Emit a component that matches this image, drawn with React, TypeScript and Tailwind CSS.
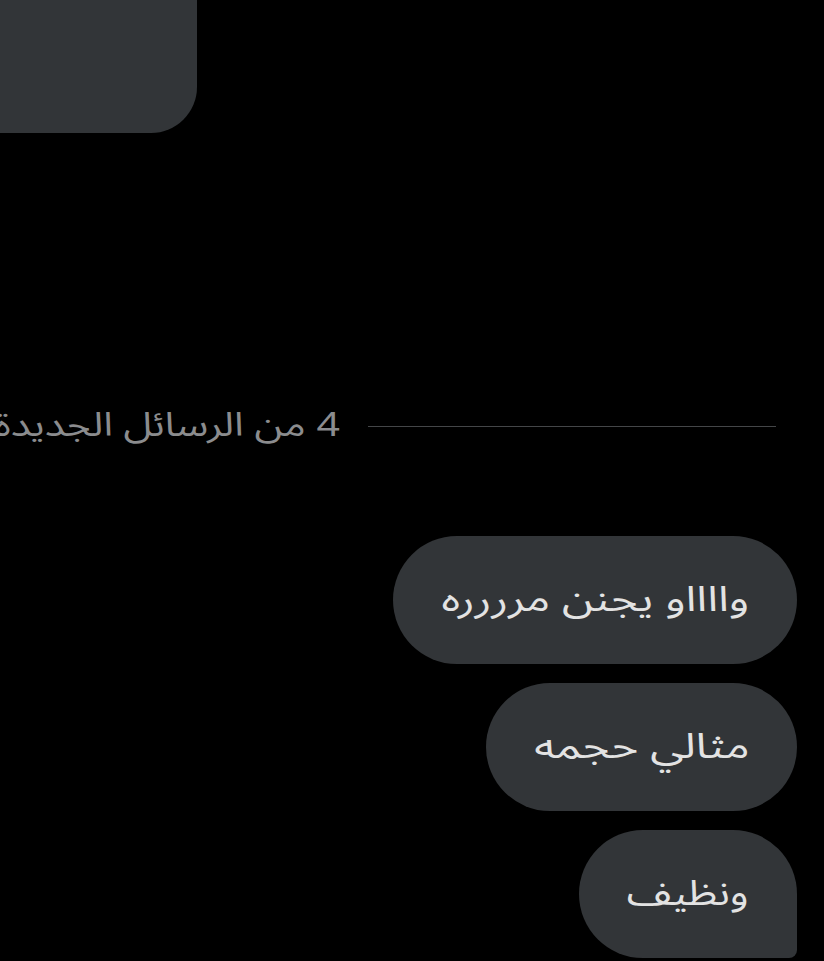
const arabicFont = { fontFamily: '"Noto Sans Arabic", "Noto Sans", "DejaVu Sans", sans-serif' };

function Bubble({ text, width, scale, last }: { text: string; width: string; scale: string; last?: boolean }) {
  return (
    <div
      dir="rtl"
      className={`flex h-[128px] items-center justify-center bg-[#323538] text-[35px] text-[#e3e3e3] ${width} ${
        last ? "rounded-[64px] rounded-br-[8px]" : "rounded-[64px]"
      }`}
      style={arabicFont}
    >
      <span className={`inline-block whitespace-nowrap ${scale}`}>{text}</span>
    </div>
  );
}

export default function App() {
  return (
    <main className="flex h-[961px] w-[824px] flex-col overflow-hidden bg-black">
      <div className="h-[133px] w-[197px] shrink-0 rounded-br-[46px] bg-[#323538]" />

      <div dir="rtl" className="mt-[268px] flex h-[50px] shrink-0 items-center gap-[28px] overflow-hidden pr-[48px]">
        <div className="h-px w-[408px] shrink-0 bg-[#444648]" />
        <span
          className="inline-block shrink-0 origin-right scale-x-[1.24] whitespace-nowrap text-[33px] text-[#8b8c8e]"
          style={arabicFont}
        >
          4 من الرسائل الجديدة
        </span>
      </div>

      <div className="mt-[85px] flex flex-col items-end gap-[19px] pr-[27px]">
        <Bubble text="وااااو يجنن مرررره" width="w-[404px]" scale="scale-x-[1.3]" />
        <Bubble text="مثالي حجمه" width="w-[311px]" scale="scale-x-[1.3]" />
        <Bubble text="ونظيف" width="w-[218px]" scale="scale-x-[1.2]" last />
      </div>
    </main>
  );
}
